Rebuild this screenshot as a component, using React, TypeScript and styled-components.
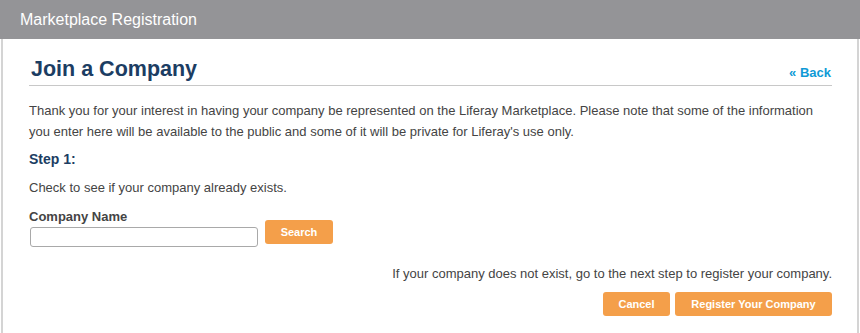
import type { FC } from 'react';
import styled, { createGlobalStyle } from 'styled-components';

const GlobalStyle = createGlobalStyle`
  * {
    margin: 0;
    padding: 0;
    box-sizing: border-box;
  }

  body {
    font-family: 'Liberation Sans', Arial, sans-serif;
    color: #444;
    background: #fff;
  }
`;

const Panel = styled.div`
  width: 860px;
  height: 333px;
  overflow: hidden;
`;

const TitleBar = styled.div`
  height: 39px;
  background: #949497;
  color: #fff;
  font-size: 16px;
  line-height: 39px;
  padding-left: 20px;
`;

const Body = styled.div`
  margin: 0 1px;
  border-left: 2px solid #d4d4d4;
  border-right: 2px solid #d4d4d4;
  height: 294px;
  padding: 18px 25px 0 26px;
`;

const Heading = styled.div`
  display: flex;
  justify-content: space-between;
  align-items: flex-end;
  border-bottom: 1px solid #c8c8c8;
  padding: 0 1px 4px 2px;
`;

const Title = styled.h1`
  font-size: 21.5px;
  font-weight: bold;
  color: #1c3d63;
  line-height: 24px;
`;

const BackLink = styled.a`
  font-size: 13px;
  font-weight: bold;
  color: #0f9ad6;
  text-decoration: none;
  margin-bottom: 1px;
`;

const Intro = styled.p`
  font-size: 13px;
  line-height: 21px;
  margin-top: 14px;
`;

const StepTitle = styled.h2`
  font-size: 14px;
  font-weight: bold;
  color: #1c3d63;
  margin-top: 8px;
  line-height: 18px;
`;

const Text = styled.p<{ $right?: boolean }>`
  font-size: 13px;
  line-height: 18px;
  margin-top: ${p => (p.$right ? '18px' : '11px')};
  text-align: ${p => (p.$right ? 'right' : 'left')};
`;

const Label = styled.label`
  display: block;
  font-size: 13px;
  font-weight: bold;
  color: #444;
  margin-top: 12px;
  line-height: 16px;
`;

const SearchRow = styled.div`
  display: flex;
  align-items: flex-start;
  gap: 7px;
  padding-left: 1px;
`;

const Input = styled.input`
  width: 228px;
  height: 20px;
  margin-top: 2px;
  border: 1px solid #a9a9a9;
  border-radius: 3px;
  background: #fff;
`;

const Button = styled.button<{ $width: number; $lift?: boolean }>`
  width: ${p => p.$width}px;
  height: 24px;
  margin-top: ${p => (p.$lift ? '-5px' : '0')};
  border: none;
  border-radius: 3px;
  background: #f49f4a;
  color: #fff;
  font-family: 'Liberation Sans', Arial, sans-serif;
  font-size: 11px;
  font-weight: bold;
  cursor: pointer;
`;

const Actions = styled.div`
  display: flex;
  justify-content: flex-end;
  gap: 5px;
  margin-top: 9px;
`;

const App: FC = () => {
  return (
    <>
      <GlobalStyle />
      <Panel>
        <TitleBar>Marketplace Registration</TitleBar>
        <Body>
          <Heading>
            <Title>Join a Company</Title>
            <BackLink href="#">« Back</BackLink>
          </Heading>
          <Intro>
            Thank you for your interest in having your company be represented on the Liferay Marketplace. Please note that some of the information
            you enter here will be available to the public and some of it will be private for Liferay's use only.
          </Intro>
          <StepTitle>Step 1:</StepTitle>
          <Text>Check to see if your company already exists.</Text>
          <Label>Company Name</Label>
          <SearchRow>
            <Input type="text" />
            <Button $width={68} $lift>Search</Button>
          </SearchRow>
          <Text $right>If your company does not exist, go to the next step to register your company.</Text>
          <Actions>
            <Button $width={67}>Cancel</Button>
            <Button $width={157}>Register Your Company</Button>
          </Actions>
        </Body>
      </Panel>
    </>
  );
};

export default App;
